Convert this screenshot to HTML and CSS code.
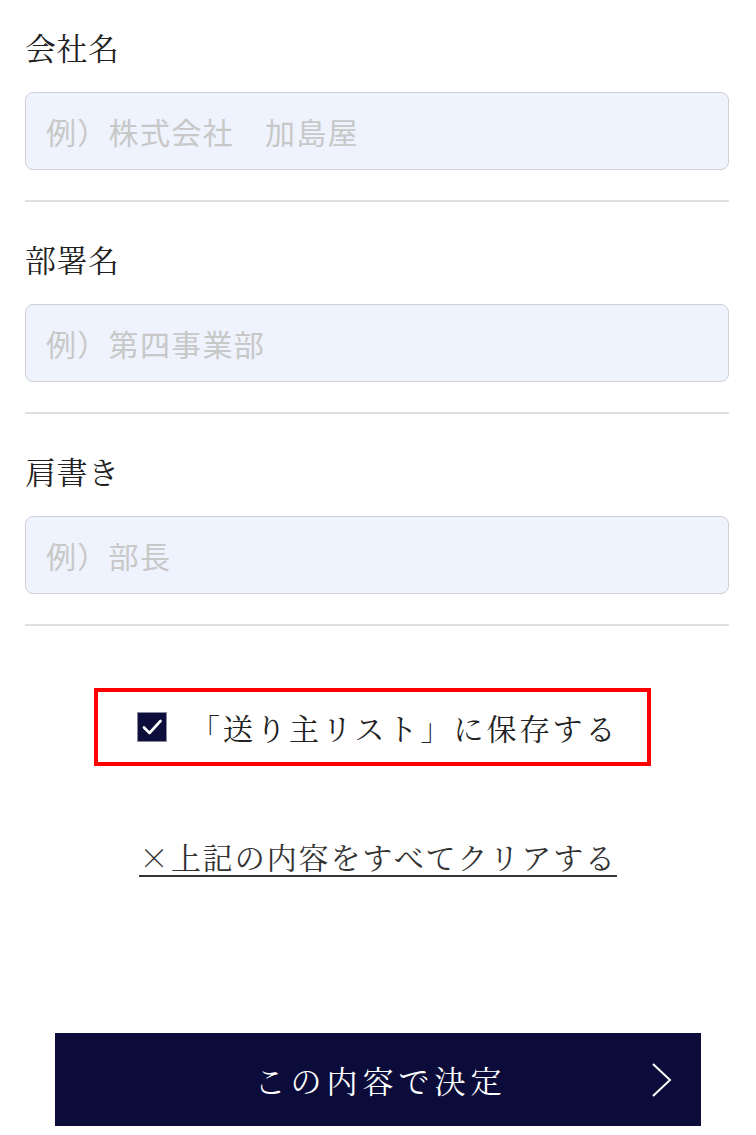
FILE: index.html
```html
<!DOCTYPE html>
<html lang="ja">
<head>
<meta charset="utf-8">
<title>送り主情報</title>
<link rel="stylesheet" href="styles.css">
</head>
<body>
<main class="page">
  <section class="field">
    <label class="field-label" for="company">会社名</label>
    <input class="field-input" id="company" type="text" placeholder="例）株式会社　加島屋">
  </section>
  <section class="field">
    <label class="field-label" for="dept">部署名</label>
    <input class="field-input" id="dept" type="text" placeholder="例）第四事業部">
  </section>
  <section class="field">
    <label class="field-label" for="title">肩書き</label>
    <input class="field-input" id="title" type="text" placeholder="例）部長">
  </section>

  <div class="save-wrap">
    <label class="save-box">
      <span class="check">
        <svg width="30" height="30" viewBox="0 0 30 30" aria-hidden="true">
          <rect x="0.5" y="0.5" width="29" height="29" fill="#0d0d3b" stroke="#8a8a9a"/>
          <polyline points="7,15.5 12.5,21 23.5,9" fill="none" stroke="#ffffff" stroke-width="2.6" stroke-linecap="round" stroke-linejoin="round"/>
        </svg>
      </span>
      <span class="save-text">「送り主リスト」に保存する</span>
    </label>
  </div>

  <div class="clear-wrap">
    <a class="clear-link" href="#">×上記の内容をすべてクリアする</a>
  </div>

  <div class="submit-wrap">
    <button class="submit" type="button">
      <span class="submit-text">この内容で決定</span>
      <svg class="chev" width="22" height="36" viewBox="0 0 22 36" aria-hidden="true">
        <polyline points="2,2 19,18 2,34" fill="none" stroke="#ffffff" stroke-width="2"/>
      </svg>
    </button>
  </div>
</main>
</body>
</html>
```

FILE: styles.css
```css
* { box-sizing: border-box; }

html, body {
  margin: 0;
  padding: 0;
  background: #ffffff;
}

body {
  font-family: "Noto Serif CJK JP", "Noto Sans CJK JP", serif;
  color: #222222;
}

.page {
  padding: 24px 27px 0 25px;
  display: flex;
  flex-direction: column;
}

.field {
  display: flex;
  flex-direction: column;
  padding-bottom: 30px;
  border-bottom: 2px solid #dedede;
  margin-bottom: 34px;
}

.field:last-of-type {
  margin-bottom: 0;
}

.field-label {
  font-size: 31px;
  line-height: 45px;
  height: 45px;
  letter-spacing: 0.5px;
  color: #222222;
  margin-bottom: 23px;
}

.field-input {
  height: 78px;
  width: 100%;
  border: 1.5px solid #d0d0d6;
  border-radius: 8px;
  background: #eef3fd;
  padding: 0 20px;
  font-family: "Noto Sans CJK JP", sans-serif;
  font-size: 30px;
  letter-spacing: 1.3px;
  color: #333333;
  outline: none;
}

.field-input::placeholder {
  color: #c8c8c8;
}

.save-wrap {
  display: flex;
  justify-content: flex-start;
  padding-left: 69px;
  margin-top: 62px;
}

.save-box {
  width: 557px;
  height: 78px;
  border: 4px solid #ff0000;
  display: flex;
  align-items: center;
  padding-left: 39px;
  gap: 23px;
}

.check {
  display: flex;
  width: 30px;
  height: 30px;
}

.save-text {
  font-size: 30px;
  letter-spacing: 3px;
  line-height: 40px;
  color: #222222;
}

.clear-wrap {
  display: flex;
  justify-content: center;
  margin-top: 70px;
  padding-left: 2px;
}

.clear-link {
  font-size: 30px;
  line-height: 40px;
  letter-spacing: 1.9px;
  color: #333333;
  text-decoration: underline;
  text-decoration-thickness: 2px;
  text-underline-offset: 6px;
}

.submit-wrap {
  display: flex;
  justify-content: flex-start;
  padding-left: 30px;
  margin-top: 157px;
}

.submit {
  position: relative;
  width: 646px;
  height: 93px;
  background: #0c0c3a;
  border: none;
  border-radius: 0;
  display: flex;
  align-items: center;
  justify-content: center;
  padding: 0;
  cursor: pointer;
}

.submit-text {
  font-family: "Noto Serif CJK JP", "Noto Sans CJK JP", serif;
  font-size: 31px;
  letter-spacing: 5px;
  color: #ffffff;
  margin-left: 5px;
}

.chev {
  position: absolute;
  right: 28px;
  top: 29px;
}
```
